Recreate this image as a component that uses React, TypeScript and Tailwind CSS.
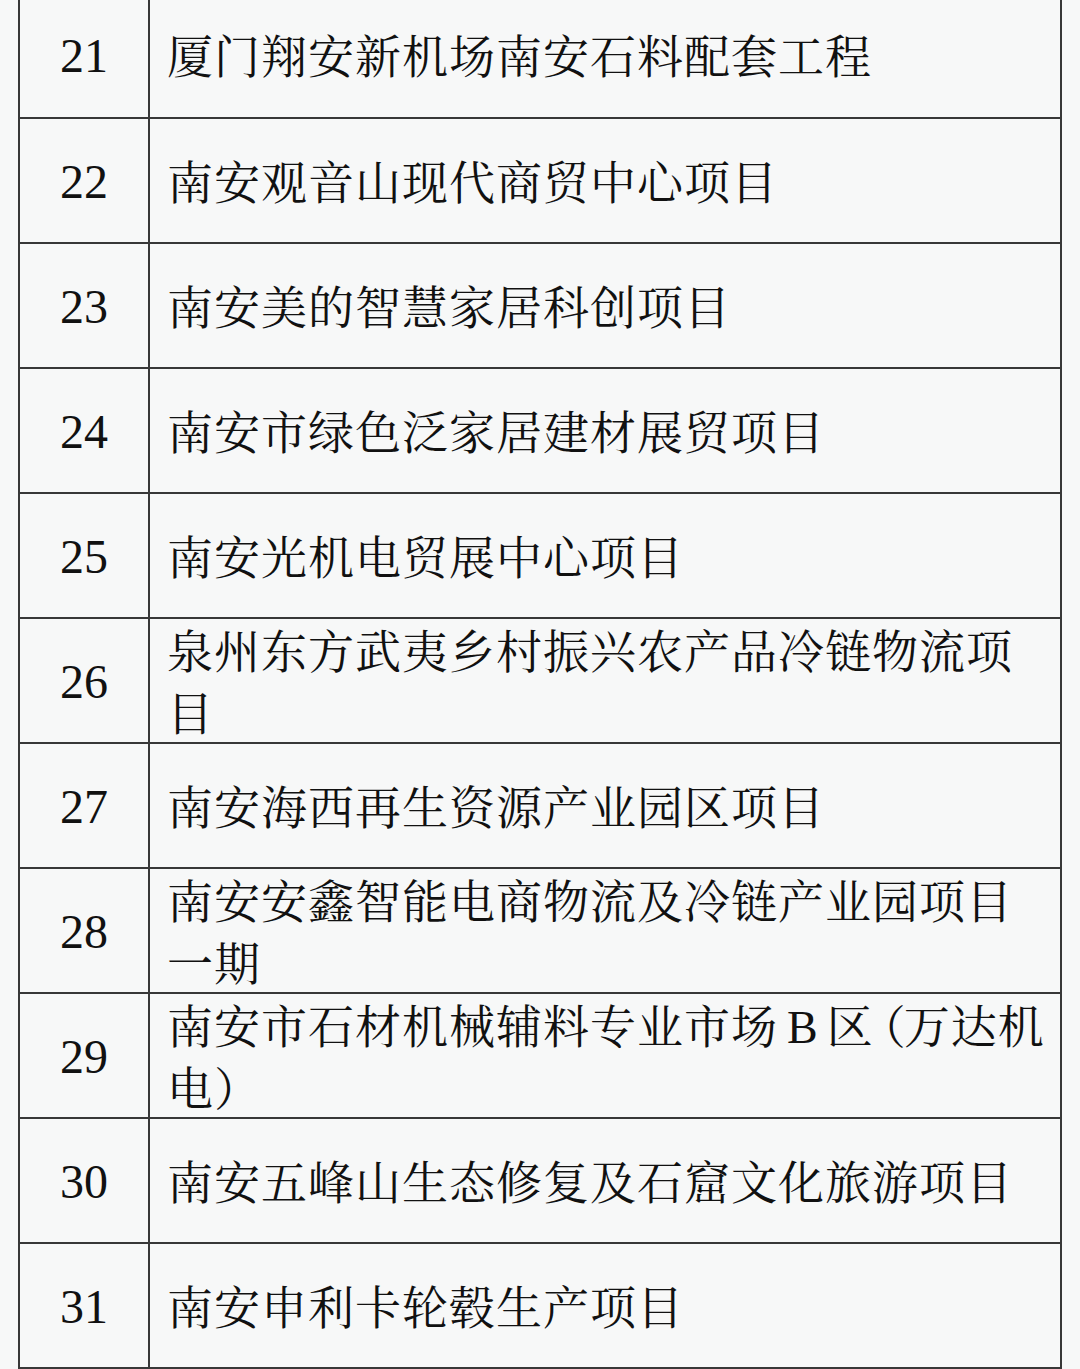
import React from "react";

type Row = { n: string; lines: React.ReactNode[] };

const rows: Row[] = [
  { n: "21", lines: ["厦门翔安新机场南安石料配套工程"] },
  { n: "22", lines: ["南安观音山现代商贸中心项目"] },
  { n: "23", lines: ["南安美的智慧家居科创项目"] },
  { n: "24", lines: ["南安市绿色泛家居建材展贸项目"] },
  { n: "25", lines: ["南安光机电贸展中心项目"] },
  { n: "26", lines: ["泉州东方武夷乡村振兴农产品冷链物流项", "目"] },
  { n: "27", lines: ["南安海西再生资源产业园区项目"] },
  { n: "28", lines: ["南安安鑫智能电商物流及冷链产业园项目", "一期"] },
  {
    n: "29",
    lines: [
      <>
        南安市石材机械辅料专业市场
        <span className="mx-[9px] tracking-normal">B</span>
        区<span className="inline-block w-[30px] -indent-[14px] align-top">（</span>万达机
      </>,
      "电）",
    ],
  },
  { n: "30", lines: ["南安五峰山生态修复及石窟文化旅游项目"] },
  { n: "31", lines: ["南安申利卡轮毂生产项目"] },
];

export default function App() {
  return (
    <div
      className="w-[1080px] h-[1369px] overflow-hidden bg-[#f7f8f8] text-[#111]"
      style={{ fontFamily: '"Liberation Serif", "Noto Serif CJK SC", "Noto Sans CJK SC", serif' }}
    >
      <div className="ml-[18px] w-[1044px] -mt-[8px] border-l-2 border-r-2 border-b-2 border-[#383838]">
        {rows.map((r, i) => (
          <div
            key={r.n}
            className={`flex h-[125px] ${i === 0 ? "" : "border-t-2 border-[#383838]"}`}
          >
            <div className="w-[130px] shrink-0 border-r-2 border-[#383838] flex items-center justify-center pt-[3px] text-[48px] leading-none">
              {r.n}
            </div>
            <div className="flex-1 flex flex-col justify-center pl-[17px] pt-[6px] text-[46px] leading-[62px] tracking-[1px] whitespace-nowrap">
              {r.lines.map((l, j) => (
                <div key={j}>{l}</div>
              ))}
            </div>
          </div>
        ))}
      </div>
    </div>
  );
}
